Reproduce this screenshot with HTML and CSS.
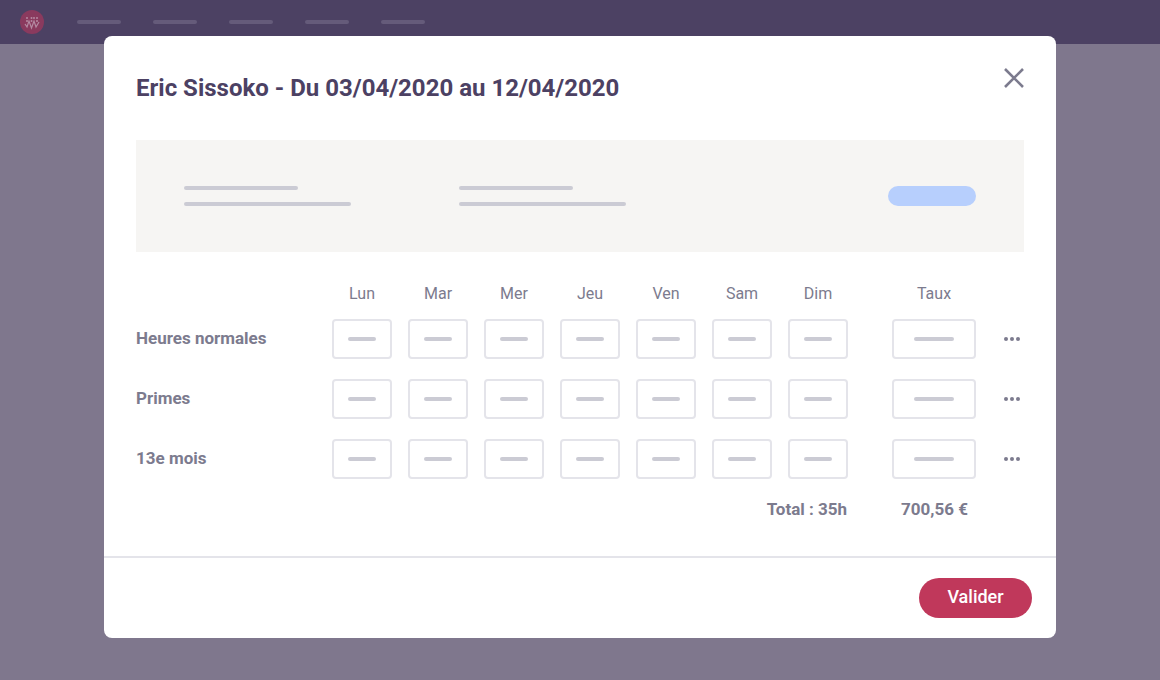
FILE: index.html
```html
<!DOCTYPE html>
<html lang="fr">
<head>
    <meta charset="UTF-8">
    <meta name="viewport" content="width=device-width, initial-scale=1.0">
    <title>Eric Sissoko</title>
    <link rel="stylesheet" href="styles.css">
</head>
<body>
    <header class="topbar">
        <svg class="logo" width="24" height="24" viewBox="0 0 24 24">
            <circle cx="12" cy="12" r="12" fill="#8a3a5e"/>
            <path d="M5 14l2 3 2-6 2.500 7 2.500-7 2 6 3-5" fill="none" stroke="#b48aa2" stroke-width="1.200"/>
            <g fill="#b48aa2">
                <circle cx="7" cy="8" r="1"/>
                <circle cx="7" cy="11" r="1"/>
                <circle cx="11.500" cy="8" r="1"/>
                <circle cx="11.500" cy="11" r="1"/>
                <circle cx="14" cy="8" r="1"/>
                <circle cx="17" cy="8" r="1"/>
                <circle cx="17" cy="11" r="1"/>
            </g>
        </svg>
        <nav class="topnav">
            <span class="topnav-item"></span>
            <span class="topnav-item"></span>
            <span class="topnav-item"></span>
            <span class="topnav-item"></span>
            <span class="topnav-item"></span>
        </nav>
    </header>

    <section class="modal">
        <div class="modal-body">
            <div class="modal-head">
                <h2>Eric Sissoko - Du 03/04/2020 au 12/04/2020</h2>
                <svg class="close" width="20" height="20" viewBox="0 0 20 20">
                    <path d="M1 1l18 18M19 1L1 19" stroke="#7c7b8e" stroke-width="2.600" fill="none"/>
                </svg>
            </div>

            <div class="summary">
                <div class="summary-col">
                    <span class="line line-short"></span>
                    <span class="line line-long"></span>
                </div>
                <div class="summary-col">
                    <span class="line line-short"></span>
                    <span class="line line-long"></span>
                </div>
                <span class="summary-pill"></span>
            </div>

            <div class="hours">
                <div class="hours-row hours-header">
                    <span class="row-label"></span>
                    <span class="day">Lun</span>
                    <span class="day">Mar</span>
                    <span class="day">Mer</span>
                    <span class="day">Jeu</span>
                    <span class="day">Ven</span>
                    <span class="day">Sam</span>
                    <span class="day">Dim</span>
                    <span class="rate">Taux</span>
                </div>

                <div class="hours-row">
                    <span class="row-label">Heures normales</span>
                    <span class="cell"><i></i></span>
                    <span class="cell"><i></i></span>
                    <span class="cell"><i></i></span>
                    <span class="cell"><i></i></span>
                    <span class="cell"><i></i></span>
                    <span class="cell"><i></i></span>
                    <span class="cell"><i></i></span>
                    <span class="cell cell-rate"><i></i></span>
                    <span class="dots"><i></i><i></i><i></i></span>
                </div>

                <div class="hours-row">
                    <span class="row-label">Primes</span>
                    <span class="cell"><i></i></span>
                    <span class="cell"><i></i></span>
                    <span class="cell"><i></i></span>
                    <span class="cell"><i></i></span>
                    <span class="cell"><i></i></span>
                    <span class="cell"><i></i></span>
                    <span class="cell"><i></i></span>
                    <span class="cell cell-rate"><i></i></span>
                    <span class="dots"><i></i><i></i><i></i></span>
                </div>

                <div class="hours-row">
                    <span class="row-label">13e mois</span>
                    <span class="cell"><i></i></span>
                    <span class="cell"><i></i></span>
                    <span class="cell"><i></i></span>
                    <span class="cell"><i></i></span>
                    <span class="cell"><i></i></span>
                    <span class="cell"><i></i></span>
                    <span class="cell"><i></i></span>
                    <span class="cell cell-rate"><i></i></span>
                    <span class="dots"><i></i><i></i><i></i></span>
                </div>

                <div class="totals">
                    <span class="total-hours">Total : 35h</span>
                    <span class="total-amount">700,56 €</span>
                </div>
            </div>
        </div>

        <footer class="modal-foot">
            <button class="validate">Valider</button>
        </footer>
    </section>
</body>
</html>
```

FILE: styles.css
```css
* {
    box-sizing: border-box;
}

body {
    margin: 0;
    height: 680px;
    overflow: hidden;
    background-color: #7f778d;
    font-family: Roboto, "Liberation Sans", sans-serif;
    color: #7c7b8e;
}

/* Barre du haut */
.topbar {
    display: flex;
    align-items: center;
    height: 44px;
    padding-left: 20px;
    background-color: #4c4163;
}

.topnav {
    display: flex;
    gap: 32px;
    margin-left: 33px;
}

.topnav-item {
    width: 44px;
    height: 4px;
    border-radius: 2px;
    background-color: #655b7a;
}

/* Fenetre */
.modal {
    position: absolute;
    top: 36px;
    left: 104px;
    width: 952px;
    height: 602px;
    display: flex;
    flex-direction: column;
    border-radius: 8px;
    background-color: #ffffff;
}

.modal-body {
    flex: 1;
    padding: 32px 32px 0;
}

.modal-head {
    display: flex;
    justify-content: space-between;
    height: 72px;
}

.modal-head h2 {
    margin: 0;
    font-size: 24px;
    font-weight: 700;
    line-height: 40px;
    color: #4c4163;
}

/* Bloc resume */
.summary {
    display: flex;
    height: 112px;
    padding: 46px 48px 0;
    background-color: #f6f5f3;
}

.summary-col {
    display: flex;
    flex-direction: column;
    gap: 12px;
    width: 275px;
}

.line {
    display: block;
    height: 4px;
    border-radius: 2px;
    background-color: #cbcbd4;
}

.line-short {
    width: 114px;
}

.line-long {
    width: 167px;
}

.summary-pill {
    width: 88px;
    height: 20px;
    margin-left: auto;
    border-radius: 10px;
    background-color: #b7cffd;
}

/* Tableau des heures */
.hours {
    padding-top: 27px;
}

.hours-row {
    display: flex;
    align-items: center;
    gap: 16px;
    height: 40px;
    margin-bottom: 20px;
}

.hours-header {
    height: 28px;
    margin-bottom: 12px;
    font-size: 16px;
}

.row-label {
    width: 180px;
    padding-bottom: 2px;
    font-size: 17px;
    font-weight: 700;
    white-space: nowrap;
}

.day {
    width: 60px;
    text-align: center;
}

.rate {
    width: 84px;
    margin-left: 28px;
    text-align: center;
}

.cell {
    display: flex;
    align-items: center;
    justify-content: center;
    width: 60px;
    height: 40px;
    border: 2px solid #e4e4ea;
    border-radius: 4px;
}

.cell i {
    width: 28px;
    height: 4px;
    border-radius: 2px;
    background-color: #cbcbd4;
}

.cell-rate {
    width: 84px;
    margin-left: 28px;
}

.cell-rate i {
    width: 40px;
}

.dots {
    display: flex;
    gap: 2px;
    margin-left: 12px;
}

.dots i {
    width: 4px;
    height: 4px;
    border-radius: 50%;
    background-color: #7c7b8e;
}

.totals {
    display: flex;
    font-size: 17px;
    font-weight: 700;
    line-height: 20px;
}

.total-hours {
    width: 711px;
    text-align: right;
}

.total-amount {
    width: 121px;
    text-align: right;
}

/* Pied */
.modal-foot {
    display: flex;
    justify-content: flex-end;
    height: 82px;
    padding: 20px 24px 0 0;
    border-top: 2px solid #e4e4ea;
}

.validate {
    width: 113px;
    height: 40px;
    padding-bottom: 4px;
    border: none;
    border-radius: 20px;
    background-color: #c0385b;
    color: #ffffff;
    font-family: Roboto, "Liberation Sans", sans-serif;
    font-size: 18px;
    font-weight: 500;
}
```
